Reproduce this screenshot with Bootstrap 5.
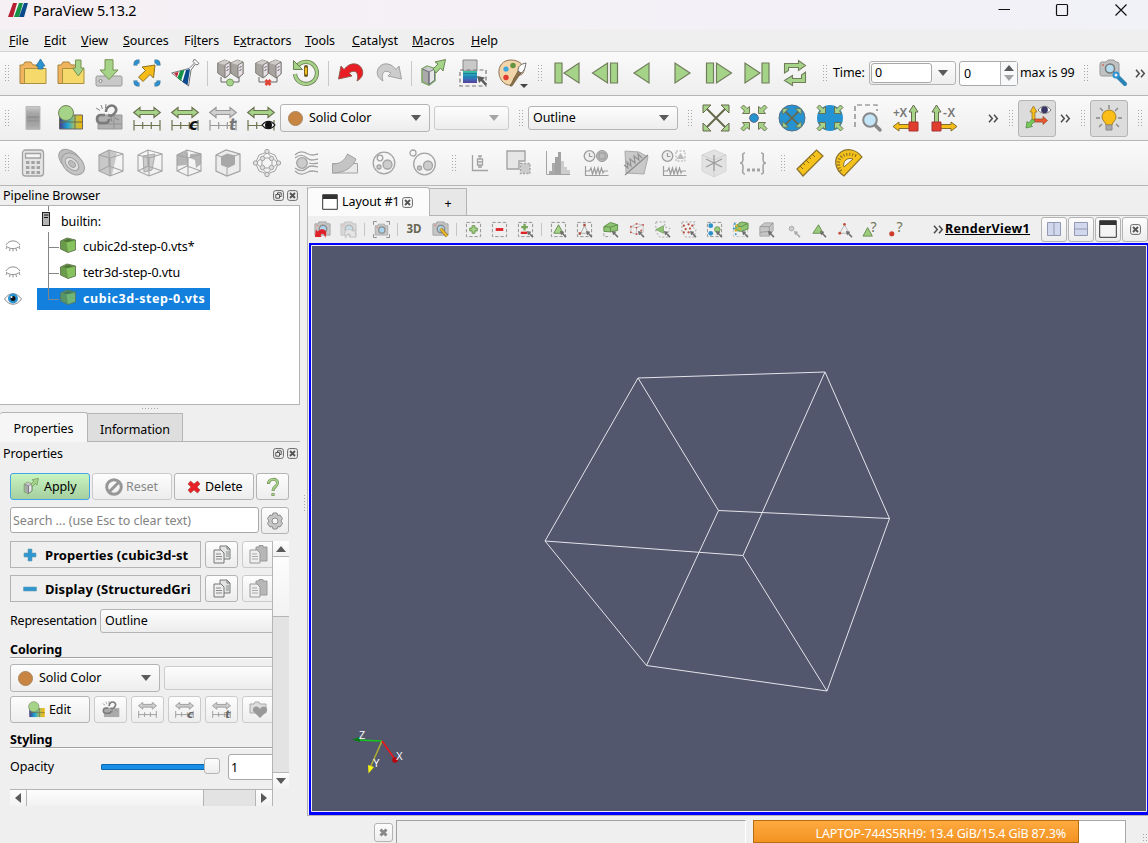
<!DOCTYPE html>
<html lang="en">
<head>
<meta charset="utf-8">
<title>ParaView 5.13.2</title>
<meta name="viewport" content="width=device-width, initial-scale=1">
<link href="https://cdn.jsdelivr.net/npm/bootstrap@5.3.0/dist/css/bootstrap.min.css" rel="stylesheet">
<style>
html,body{height:843px;overflow:hidden}
body{background:#efefef;font:12.5px/16px "Noto Sans","Open Sans",sans-serif;letter-spacing:-.08px;color:#000;width:1148px}
svg{display:block;flex:none;overflow:visible}
span,u,b{white-space:nowrap}
.titlebar{height:29px;background:linear-gradient(90deg,#f6f0f4,#f1f1f8)}
.titlebar .caption{font-size:14.4px;letter-spacing:-.2px;width:104px;margin-left:5px;line-height:22px;height:22px}
.menus{height:23px;border-bottom:1px solid #d3d3d3;padding-left:9px}
.menus span{display:block;line-height:24px}
.bar{height:45px;border-bottom:1px solid #b6b6b6;background:linear-gradient(#fafafa,#eee)}
.cell{width:38px;display:flex;justify-content:center;flex:none}
.cell39{width:39px;display:flex;justify-content:center;flex:none}
.cell svg,.cell39 svg{width:28px;height:28px}
.grip{width:5px;height:17px;flex:none;background-image:radial-gradient(circle at .5px .5px,#a8a8a8 .6px,transparent .8px);background-size:3px 3px}
.vsep{width:1px;height:25px;background:#c8c8c8;margin:0 3px;flex:none}
.qbox{border:1px solid #b4b4b4;border-radius:3px;background:linear-gradient(#fdfdfd,#ededed);display:flex;align-items:center;flex:none}
.qoff{border-color:#cbcbcb;color:#888}
.sunk{background:#dcdcdc}
.field{background:#fff;border:1px solid #a9a9a9;border-radius:3px;flex:none}
.tri{width:0;height:0;border:5px solid transparent;border-bottom:0;border-top:6px solid #5a5a5a;flex:none}
.tri.up{border:5px solid transparent;border-top:0;border-bottom:6px solid #5a5a5a}
.tri.lt{border:5px solid transparent;border-left:0;border-right:6px solid #5a5a5a}
.tri.rt{border:5px solid transparent;border-right:0;border-left:6px solid #5a5a5a}
.tri.pale{border-top-color:#a5a5a5}
.dot{width:15px;height:15px;border-radius:50%;background:#c78541;border:1px solid #a8855f;flex:none}
.dock{width:300px}
.dockhead{height:19px;padding:0 2px 0 3px}
.tree{height:200px;border:1px solid #b4b4b4;border-left:0;background:#fff}
.treerow{height:26px;display:flex;align-items:center}
.sel{background:#1280dc;color:#fff;height:22px;width:173px;font-weight:700;letter-spacing:.56px;display:flex;align-items:center}
.tabs{height:30px}
.tabon{width:88px;height:30px;background:#f6f6f6;border:1px solid #b4b4b4;border-left:0;border-bottom:0;border-radius:3px 3px 0 0;text-align:center;line-height:32px}
.taboff{width:95px;height:29px;margin-top:1px;background:#dedede;border:1px solid #b4b4b4;border-left:0;text-align:center;line-height:32px}
.props{padding-left:10px}
.scroller{width:262px;height:248px;overflow:hidden}
.sechead{width:191px;height:27px;border:1px solid #b4b4b4;font-size:13px;font-weight:700;letter-spacing:.1px;display:flex;align-items:center;padding-left:12px;flex:none}
.rule{border-bottom:1px solid #a0a0a0;font-weight:700;box-shadow:0 1px #fff}
.vscroll{width:17px;height:248px;border-left:1px solid #b4b4b4;background:#e3e3e3}
.hscroll{width:263px;height:17px;border-top:1px solid #b4b4b4;border-right:1px solid #b4b4b4;background:#e3e3e3}
.knob{background:linear-gradient(#fdfdfd,#f2f2f2);display:flex;align-items:center;justify-content:center;flex:none}
.work{width:841px;border-left:1px solid #b4b4b4;height:629px;border-bottom:1px solid #b4b4b4}
.sm{width:26px;display:flex;justify-content:center;flex:none}
.sm svg{width:17px;height:17px}
.smsep{width:1px;height:13px;background:#c4c4c4;margin:0 3px;flex:none}
.render{background:#52576e;height:572px;border:3px solid #0000ff;border-width:2px 1px 3px 2px;position:relative}
.usage{width:373px;height:23px;border:1px solid #a9a9a9;border-bottom:0;background:#fff}
.usage .fill{background:linear-gradient(#ffaa40,#f29322);border:1px solid #b56d10;color:#fff;height:23px;margin:-1px;text-align:right;padding-right:12px;line-height:26px;letter-spacing:-.15px}
</style>
</head>
<body>
<svg width="0" height="0" class="position-absolute">
<defs>
<linearGradient id="rainbow"><stop offset="0" stop-color="#453a86"/><stop offset=".35" stop-color="#1da5d8"/><stop offset=".7" stop-color="#b9c256"/><stop offset="1" stop-color="#f5b400"/></linearGradient>
<linearGradient id="greyv" x2="0" y2="1"><stop offset="0" stop-color="#ccc"/><stop offset=".5" stop-color="#8c8c8c"/><stop offset="1" stop-color="#b5b5b5"/></linearGradient>
<linearGradient id="cool" x2="0" y2="1"><stop offset="0" stop-color="#39c49e"/><stop offset=".5" stop-color="#2086c8"/><stop offset="1" stop-color="#5d3e99"/></linearGradient>
<g id="chev"><path d="M1 .8 4.300 4.500 1 8.200M6 .8l3.300 3.700L6 8.200" fill="none" stroke="#4c4c4c" stroke-width="1.500"/></g>
<g id="folder"><path d="M1 24.500V6h3l2-3h6l2 3h8v18.500z" fill="#f0b35e" stroke="#a8843c"/><path d="M5.500 9.500h21.500v15H5.500z" fill="#f5d96b" stroke="#a8903f"/></g>
<g id="server"><path d="M.7 4 7.500 1l5.500 2v12l-5 4-7.300-5z" fill="#a7a49f" stroke="#77746d" stroke-width=".9"/><path d="M1 4l6.500-3L13 3 8 6z" fill="#cfccc9"/><path d="M8 6l5-3v12l-5 4z" fill="#e6dfe5" stroke="#77746d" stroke-width=".9"/><path d="M9.500 8.500l2-1M9.500 11.500l2-1" stroke="#555" fill="none"/></g>
<g id="harrow"><path d="M.7 8.500 7 3.500v3h14v-3l6.300 5-6.300 5v-3H7v3z"/></g>
<g id="scale"><path d="M1 16v10.500M27 16v10.500M1 21.500h26M9.700 18v7M18.300 18v7" fill="none"/></g>
<g id="cubew"><path d="M2 6 12 1l14 4v17l-13 5L2 22zM2 6l11 3 13-4M13 9v18M12 1v16M2 22l10-5 14 5" fill="none" stroke="#a3a3a3" stroke-width="1.100"/></g>
<g id="headout"><path d="M1 1h8L1 9z" fill="#a5d388" stroke="#67694c"/></g>
<g id="headin"><path d="M9.500 9.500H2.500l2-2.500L1 3.500 3.500 1 7 4.500l2.500-2z" fill="#a5d388" stroke="#67694c" stroke-width=".9"/></g>
<g id="clock"><circle cx="6.500" cy="7" r="5.300" fill="#eee" stroke="#9d9d9d" stroke-width="1.300"/><path d="M6.500 4v3.500h3M2.500 17v10M2.500 22h4l1.500-3 1.500 6 2-6 1.500 6 2-6 1.500 6 2-6 1.500 5 1-2h4M2.500 26.500h23" fill="none" stroke="#9d9d9d" stroke-width="1.200"/></g>
<g id="cam"><path d="M1 3h4V1h8v2h4v12H1z" fill="#c6c6c6" stroke="#a5a5a5"/><circle cx="9.500" cy="8.500" r="4" fill="#a9d5ee" stroke="#8c8c8c" stroke-width="1.500"/><path d="M2.500 5h2" stroke="#e76"/></g>
<g id="dash"><path d="M1.500 1.500h15v15h-15z" fill="none" stroke="#909090" stroke-dasharray="3.500 2"/></g>
<g id="cur"><path d="M10.500 10.500 15 11.500 14 13l3.500 3.500-1.300 1.300L13 14l-1.300 1z" fill="#6d6d6d"/></g>
<g id="closebox"><rect x=".6" y=".6" width="9.800" height="9.800" rx="2" fill="none" stroke="#666"/><path d="M3 3l5 5M8 3 3 8" stroke="#555" stroke-width="1.900"/></g>
<g id="floatbox"><rect x=".6" y=".6" width="9.800" height="9.800" rx="2" fill="none" stroke="#666"/><path d="M4.500 4V2.800h3.700v3.700H7M2.800 4.500h3.700v3.700H2.800z" fill="none" stroke="#555"/></g>
<g id="gcube"><path d="M.5 4 7 1l8.500 2v10L8 15.500.5 12z" fill="#699b4b" stroke="#647652" stroke-width=".9"/><path d="M6.500 5.500 15 4v8.500l-7 2.500z" fill="#86c35f"/><path d="M3 4l5-2 5 1.300-6 1.700z" fill="#4d7535"/></g>
<g id="closedeye"><path d="M1 6C4 .5 12 .5 15 6M1 7c4 3.500 10 3.500 14 0M2 8l-1 2M5 9.500 4.500 12M8 10v2.500M11 9.500l.5 2.500M14 8l1 2" fill="none" stroke="#929292"/></g>
<g id="chain"><path d="M10 11H5c-4 1-4 7 0 8h5c3 0 4-2 4-4M11 8c0-6 6-8 9-5s0 7-4 9l-3-1" fill="none" stroke="#7b7b7b" stroke-width="2.600"/><path d="M6 1l1.500 4M1 4l4 2.500M11 0l-.5 4M20 14l4 2M16 14l1 4" stroke="#888"/></g>
<g id="pages"><path d="M7 1h7l3 3v10H7z" fill="#e2e4e4" stroke="#777"/><path d="M14 1v3h3" fill="none" stroke="#777"/><path d="M1 5h7l3 3v10H1z" fill="#eee" stroke="#777"/><path d="M3 9h5M3 11.500h6M3 14h6M13 7h3M13 9h3M13 11h3" stroke="#888"/></g>
<g id="paste"><path d="M7 2h3V.5h4V2h4v14H7z" fill="#b7b7b7" stroke="#999"/><path d="M1 5h7l3 3v10H1z" fill="#eee" stroke="#999"/><path d="M3 9h5M3 11.500h6M3 14h6" stroke="#aaa"/></g>
<g id="boxarrow"><path d="M2 10l5-3 8 2.500v12L9 26l-7-3z" fill="#aaa" stroke="#7fa768" stroke-width="1.600"/><path d="M2.500 10l5-2.500 7 2.500-5.500 3z" fill="#c9c9c9"/><path d="M9 13l5.500-3v11L9 25.500z" fill="#e6e6e6" stroke="#667" stroke-width=".8"/><path d="M2.500 10 9 13v12.500" fill="none" stroke="#667"/><path d="M13 10l5-5-3-2 10.500-2.500L23 12l-2.500-3-4.500 5z" fill="#a5d388" stroke="#6a8853"/></g>
</defs>
</svg>

<header class="titlebar d-flex">
  <svg width="20" height="17" viewBox="0 0 20 17" style="margin:3px 0 0 8px"><path d="M5 0h4L5 14H0z" fill="#b51f31"/><path d="M11 0h4l-4 14H6z" fill="#159447"/><path d="M16 0h4l-4 14h-5z" fill="#0b4a8d"/></svg>
  <span class="caption">ParaView 5.13.2</span>
  <svg class="ms-auto" width="140" height="22" viewBox="998 0 140 22"><path d="M998.500 9.500h11.500M1115.500 4.500l11 11m0-11-11 11" stroke="#111" stroke-width="1.200"/><rect x="1056.500" y="4.500" width="11" height="11" rx="1" stroke="#111" stroke-width="1.200" fill="none"/></svg>
  <i style="width:10px"></i>
</header>

<nav class="menus d-flex">
  <span style="width:35px"><u>F</u>ile</span><span style="width:37px"><u>E</u>dit</span><span style="width:42px"><u>V</u>iew</span><span style="width:61px"><u>S</u>ources</span><span style="width:49px">Fi<u>l</u>ters</span><span style="width:72px">E<u>x</u>tractors</span><span style="width:47px"><u>T</u>ools</span><span style="width:60px"><u>C</u>atalyst</span><span style="width:59px"><u>M</u>acros</span><span><u>H</u>elp</span>
</nav>

<div class="bar d-flex align-items-center" style="height:44px;padding-bottom:1px">
  <div class="grip" style="margin:0 4px 0 5px"></div>
  <div class="cell"><svg viewBox="0 0 28 28"><use href="#folder"/><path d="M21.500 0 26 7h-2v3h-5V7h-2z" fill="#2b93d1" stroke="#27668b" stroke-width=".7"/></svg></div>
  <div class="cell"><svg viewBox="0 0 28 28"><use href="#folder"/><path d="M18.500 1H24v8h3l-5.700 8L15.500 9h3z" fill="#a5d388" stroke="#77914f"/></svg></div>
  <div class="cell"><svg viewBox="0 0 28 28"><rect x="1" y="17" width="26" height="10" rx="1.500" fill="#c8c8c8" stroke="#999"/><circle cx="5.500" cy="22" r="1.500" fill="#eee" stroke="#888"/><path d="M10 .7h8V11h5l-9 9.500L5 11h5z" fill="#a5d388" stroke="#77914f"/></svg></div>
  <div class="cell"><svg viewBox="0 0 28 28"><path d="M2.500 6.500v-1q0-3 3-3h1M21.500 2.500h1q3 0 3 3v1M2.500 21.500v1q0 3 3 3h1M21.500 25.500h1q3 0 3-3v-1" fill="none" stroke="#3b6f92" stroke-width="4"/><path d="M2.500 6v-.5q0-3 3-3H6M22 2.500h.5q3 0 3 3V6M2.500 22v.5q0 3 3 3H6M22 25.500h.5q3 0 3-3V22" fill="none" stroke="#2b93d1" stroke-width="2.800"/><path d="M5.500 18l7-6.500L9 8l13-2-1.500 13-3.500-3.500-7 7z" fill="#f5bb17" stroke="#8b7127"/></svg></div>
  <div class="cell"><svg viewBox="0 0 28 28"><path d="M.7 14 18 9.500 23.500 4 22 2.500 23.500 0 28 4.500l-2 1.500-1.500-1L20 11l-2.500 16z" fill="#fafafa" stroke="#666" stroke-width=".9"/><path d="M3 14l4.500-1L6 18z" fill="#c52535"/><path d="M9 12l4.500-1L10 22l-3.500-3z" fill="#159447"/><path d="M15 11l4-1-2.500 16-5-3z" fill="#0b4a8d"/></svg></div>
  <div class="vsep"></div>
  <div class="cell"><svg viewBox="0 0 28 28"><use href="#server" x="1"/><use href="#server" x="14"/><path d="M5 18v5h18v-5" fill="none" stroke="#666"/><circle cx="14" cy="23.500" r="3.500" fill="#a5d388" stroke="#799b64"/></svg></div>
  <div class="cell"><svg viewBox="0 0 28 28"><use href="#server" x="1"/><use href="#server" x="14"/><path d="M5 18v5h18v-5" fill="none" stroke="#666"/><path d="M11.500 21l5 5m0-5-5 5" stroke="#e04537" stroke-width="2.800"/></svg></div>
  <div class="cell"><svg viewBox="0 0 28 28"><path d="M5 7.500A11 11 0 1 1 3 15" fill="none" stroke="#6d7d54" stroke-width="4.200"/><path d="M5 7.500A11 11 0 1 1 3 15" fill="none" stroke="#a5d388" stroke-width="2.600"/><path d="M1.500 1.500v9h9z" fill="#a5d388" stroke="#6d7d54"/><path d="M14 8v8" stroke="#69551d" stroke-width="4" stroke-linecap="round"/><path d="M14 8.500v7" stroke="#f1bd25" stroke-width="2.300"/></svg></div>
  <div class="vsep"></div>
  <div class="cell"><svg viewBox="0 0 28 28"><path d="M1.500 20 4 7l3 3.500C13 2.500 22 3.500 25 10c2 5 0 9-5 12 2-6 0-13-8-8l3 3z" fill="#e91d24" stroke="#8a5a4a" stroke-width=".9"/></svg></div>
  <div class="cell"><svg viewBox="0 0 28 28"><path d="M26.500 20 24 7l-3 3.500C15 2.500 6 3.500 3 10c-2 5 0 9 5 12-2-6 0-13 8-8l-3 3z" fill="#ccc" stroke="#9a9a9a" stroke-width=".9"/></svg></div>
  <div class="vsep" style="margin:0 2px 0 3px"></div>
  <div class="cell39"><svg viewBox="0 0 28 28"><use href="#boxarrow"/></svg></div>
  <div class="cell39"><svg viewBox="0 0 28 28"><path d="M4 1h14v11H4z" fill="#c9c9c9" stroke="#888"/><path d="M4 12h14v12H4z" fill="url(#cool)"/><path d="M4 14.500h14M4 18h14" stroke="#1f7d99"/><path d="M1 11h26v16H1z" fill="none" stroke="#777" stroke-dasharray="4 2.500" stroke-width="1.200"/><path d="M18 17l8 1.500-2 2 4 4.500-2 1.500-4-4.500-2 2z" fill="#5c5c5c"/></svg></div>
  <div class="cell39"><svg viewBox="0 0 28 28"><path d="M13 1C5 1 0 7 1 15c1 7 7 12 12 11 4-1 1-6 4-8 4-2 9-2 9-7 0-6-6-10-13-10z" fill="#f1d4a8" stroke="#8f7557"/><circle cx="8" cy="10" r="2.600" fill="#3aa7e0"/><circle cx="15" cy="6.500" r="2.700" fill="#62943e"/><circle cx="8" cy="18.500" r="2.700" fill="#e13b2e"/><path d="M12 27l8-15 3 2-9 13z" fill="#8b7146" stroke="#5d4e34" stroke-width=".6"/><path d="M20 12c0-5 3-7 8-8-1 4-1 8-5 10z" fill="#fff" stroke="#666"/><path d="M22 25h8l-4 4z" fill="#444"/></svg></div>
  <div class="grip" style="margin:0 5px 0 7px"></div>
  <div class="cell"><svg viewBox="0 0 28 28"><path d="M2 4h7v20H2zM26 4v20L11 14z" fill="#a5d388" stroke="#717d5b" stroke-width="1.200"/></svg></div>
  <div class="cell"><svg viewBox="0 0 28 28"><path d="M19.500 4h7v20h-7zM16.500 4v20L1.500 14z" fill="#a5d388" stroke="#717d5b" stroke-width="1.200"/></svg></div>
  <div class="cell"><svg viewBox="0 0 28 28"><path d="M20 4v20L5 14z" fill="#a5d388" stroke="#717d5b" stroke-width="1.200"/></svg></div>
  <div class="cell"><svg viewBox="0 0 28 28"><path d="M8 4v20l15-10z" fill="#a5d388" stroke="#717d5b" stroke-width="1.200"/></svg></div>
  <div class="cell"><svg viewBox="0 0 28 28"><path d="M1.500 4h7v20h-7zM11.500 4v20l15-10z" fill="#a5d388" stroke="#717d5b" stroke-width="1.200"/></svg></div>
  <div class="cell"><svg viewBox="0 0 28 28"><path d="M19 4h7v20h-7zM2 4v20l15-10z" fill="#a5d388" stroke="#717d5b" stroke-width="1.200"/></svg></div>
  <div class="cell"><svg viewBox="0 0 28 28"><path d="M3.500 14V4.500h14V1.500l7 5-7 5v-3h-10v3zM24.500 13v10.500h-13v3l-8-5 8-5v3h9V16z" fill="#a5d388" stroke="#717d5b" stroke-width="1.100"/></svg></div>
  <div class="grip" style="margin:0 2px 0 9px"></div>
  <span style="width:37px;margin-left:3px">Time:</span>
  <div class="qbox" style="width:87px;height:24px;margin-left:-1px"><div class="field" style="width:61px;height:20px;padding-left:3px;line-height:18px;margin-left:1px">0</div><i class="tri" style="margin-left:6px"></i></div>
  <div class="field d-flex align-items-stretch" style="width:59px;height:25px;margin-left:3px;line-height:24px"><span style="width:41px;padding-left:4px;border-right:1px solid #b4b4b4">0</span><div class="flex-grow-1 d-flex flex-column align-items-center justify-content-center gap-1 bg-light"><i class="tri up"></i><i class="tri pale"></i></div></div>
  <span style="width:64px;margin-left:2px">max is 99</span>
  <div class="grip"></div>
  <svg width="30" height="30" viewBox="0 0 30 30" style="margin:0 6px 0 10px"><path d="M1 6q0-2 2-2h4l2-2h6l2 2h1q2 0 2 2v10q0 2-2 2H3q-2 0-2-2z" fill="#bfc1c2" stroke="#999"/><circle cx="11" cy="10.500" r="4.500" fill="#b4def0" stroke="#777" stroke-width="1.500"/><path d="M3 7h2" stroke="#e04537"/><path d="M17 17l9 9" stroke="#2b82b7" stroke-width="4" stroke-linecap="round"/><circle cx="17" cy="17" r="2.500" fill="#eee" stroke="#2b93d1" stroke-width="2"/></svg>
  <svg width="11" height="9"><use href="#chev"/></svg>
</div>

<div class="bar d-flex align-items-center">
  <div class="grip" style="margin:0 4px 0 5px"></div>
  <div class="cell"><svg viewBox="0 0 28 28"><path d="M7 2.500h14v23H7z" fill="url(#greyv)" stroke="#bbb"/><path d="M7 11h14M7 15h14M7 19h14" stroke="#aaa"/></svg></div>
  <div class="cell"><svg viewBox="0 0 28 28"><path d="M2.500 11h23v14h-23z" fill="url(#rainbow)" stroke="#666"/><path d="M2 18h24M18 11v14" stroke="#6e6d43"/><circle cx="9" cy="9" r="7.500" fill="#a5d388" stroke="#718359"/></svg></div>
  <div class="cell"><svg viewBox="0 0 28 28"><path d="M3 11h24v14H3z" fill="#b0b0b0" stroke="#999"/><path d="M19 11v14M3 20h24" stroke="#929292"/><use href="#chain"/></svg></div>
  <div class="cell"><svg viewBox="0 0 28 28" fill="#a5d388" stroke="#6c7450" stroke-width="1.200"><use href="#harrow"/><use href="#scale"/></svg></div>
  <div class="cell"><svg viewBox="0 0 28 28" fill="#a5d388" stroke="#6c7450" stroke-width="1.200"><use href="#harrow"/><use href="#scale"/><text x="18" y="26" font-family="DejaVu Sans" font-size="15" font-weight="700" font-style="italic" fill="#111" stroke="none">c</text></svg></div>
  <div class="cell"><svg viewBox="0 0 28 28" fill="#d0d0d0" stroke="#999" stroke-width="1.200"><use href="#harrow"/><use href="#scale"/><text x="20" y="26" font-family="DejaVu Sans" font-size="15" font-weight="700" font-style="italic" fill="#777" stroke="none">t</text></svg></div>
  <div class="cell"><svg viewBox="0 0 28 28" fill="#a5d388" stroke="#6c7450" stroke-width="1.200"><use href="#harrow"/><use href="#scale"/><path d="M15 21c4-5 9-5 13 0-4 5-9 5-13 0z" fill="#fff" stroke="#111"/><circle cx="21.500" cy="21" r="3.500" fill="#111" stroke="none"/></svg></div>
  <div class="qbox" style="width:150px;height:28px"><i class="dot" style="margin-left:7px"></i><span style="margin-left:6px;width:102px">Solid Color</span><i class="tri"></i></div>
  <div class="qbox qoff" style="width:75px;height:24px;margin-left:4px"><i class="tri pale" style="margin-left:54px"></i></div>
  <div class="grip" style="margin:0 4px 0 10px"></div>
  <div class="qbox" style="width:150px;height:24px"><span style="width:130px;padding-left:4px">Outline</span><i class="tri"></i></div>
  <div class="grip" style="margin:0 4px 0 10px"></div>
  <div class="cell"><svg viewBox="0 0 28 28"><path d="M4 4l20 20M24 4 4 24" stroke="#67694c" stroke-width="2"/><use href="#headout"/><use href="#headout" transform="matrix(-1 0 0 1 28 0)"/><use href="#headout" transform="matrix(1 0 0 -1 0 28)"/><use href="#headout" transform="rotate(180 14 14)"/></svg></div>
  <div class="cell"><svg viewBox="0 0 28 28"><use href="#headin"/><use href="#headin" transform="matrix(-1 0 0 1 28 0)"/><use href="#headin" transform="matrix(1 0 0 -1 0 28)"/><use href="#headin" transform="rotate(180 14 14)"/><circle cx="14" cy="14" r="4.300" fill="#2592d2" stroke="#52667b"/></svg></div>
  <div class="cell"><svg viewBox="0 0 28 28"><circle cx="14" cy="14" r="13" fill="#2592d2" stroke="#52718b"/><g transform="translate(4 4) scale(.71)"><path d="M4 4l20 20M24 4 4 24" stroke="#67694c" stroke-width="2.500"/><use href="#headout"/><use href="#headout" transform="matrix(-1 0 0 1 28 0)"/><use href="#headout" transform="matrix(1 0 0 -1 0 28)"/><use href="#headout" transform="rotate(180 14 14)"/></g></svg></div>
  <div class="cell"><svg viewBox="0 0 28 28"><circle cx="14" cy="14" r="13" fill="#2592d2"/><use href="#headin"/><use href="#headin" transform="matrix(-1 0 0 1 28 0)"/><use href="#headin" transform="matrix(1 0 0 -1 0 28)"/><use href="#headin" transform="rotate(180 14 14)"/></svg></div>
  <div class="cell"><svg viewBox="0 0 28 28"><path d="M1 23V1h22v6" fill="none" stroke="#777" stroke-dasharray="5 3" stroke-width="1.200"/><path d="M21 21l5 5" stroke="#888" stroke-width="3.500" stroke-linecap="round"/><circle cx="16" cy="16" r="6.800" fill="#c4e5f7" stroke="#888" stroke-width="2"/></svg></div>
  <div class="cell"><svg viewBox="0 0 28 28"><path d="M21.500 1l4.500 7h-2.500v11h-4V8H17z" fill="#a5d388" stroke="#67694c"/><path d="M1 22.500l6-4.500v2.500h13v4H7V27z" fill="#f4bd19" stroke="#836c2c"/><path d="M17 18h9v9h-9z" fill="#df3e2e" stroke="#a33"/><text x="1" y="13" font-family="Noto Sans" font-size="12" font-weight="600" fill="#777" textLength="14">+X</text></svg></div>
  <div class="cell"><svg viewBox="0 0 28 28"><path d="M6.500 1 11 8H8.500v11h-4V8H2z" fill="#a5d388" stroke="#67694c"/><path d="M27 22.500 21 18v2.500H8v4h13V27z" fill="#f4bd19" stroke="#836c2c"/><path d="M2 18h9v9H2z" fill="#df3e2e" stroke="#a33"/><text x="13" y="13" font-family="Noto Sans" font-size="12" font-weight="600" fill="#777" textLength="12">-X</text></svg></div>
  <svg width="11" height="9" style="margin:0 10px 0 25px"><use href="#chev"/></svg>
  <div class="grip" style="margin-right:4px"></div>
  <div class="qbox sunk justify-content-center" style="width:38px;height:37px"><svg width="28" height="28" viewBox="0 0 28 28"><path d="M9 17V8H7l3.500-6L14 8h-2v9" fill="#f4bd19" stroke="#9a762b" stroke-width=".8"/><path d="M11 15h9v-2.500l4.500 4-4.500 4V18h-9z" fill="#ef5730" stroke="#93512e" stroke-width=".8"/><path d="M9 15l3 2-4 4 1.500 1.500L3 24l1-6.500L6 19z" fill="#74ce56" stroke="#5c8651" stroke-width=".8"/><path d="M15 6c4-5 9-5 13 0-4 4.500-9 4.500-13 0z" fill="#fff" stroke="#777"/><circle cx="21.500" cy="5.800" r="3.400" fill="#393766"/></svg></div>
  <svg width="11" height="9" style="margin:0 10px 0 4px"><use href="#chev"/></svg>
  <div class="grip" style="margin-right:4px"></div>
  <div class="qbox sunk justify-content-center" style="width:38px;height:37px"><svg width="28" height="28" viewBox="0 0 28 28"><path d="M14 1v4M5 4l3 3M23 4l-3 3M1 14h4M23 14h4M4 23l3-3M24 23l-3-3" stroke="#888" stroke-width="1.400"/><path d="M11 21c0-3-4-4-4-8a7 7 0 0 1 14 0c0 4-4 5-4 8z" fill="#fbbd18" stroke="#a38226"/><path d="M11 21h6v5h-6z" fill="#aaa" stroke="#888"/></svg></div>
  <div class="grip" style="margin-left:10px"></div>
</div>

<div class="bar d-flex align-items-center">
  <div class="grip" style="margin:0 3px 0 5px"></div>
  <div class="cell39"><svg viewBox="0 0 28 28" fill="none" stroke="#a3a3a3" stroke-width="1.300"><rect x="3.500" y="1" width="21" height="26" rx="3" fill="#e4e4e4"/><path d="M6.500 4.500h15v4.500h-15z" fill="#f5f5f5"/><path d="M7 13.500h14M7 18.500h14M7 23.500h14" stroke-width="3.200" stroke-dasharray="3.400 1.900"/></svg></div>
  <div class="cell39"><svg viewBox="0 0 28 28" fill="#bdbdbd" stroke="#a0a0a0"><ellipse cx="12" cy="11" rx="13" ry="8.500" transform="rotate(42 12 11)"/><ellipse cx="15" cy="15" rx="13" ry="9" transform="rotate(42 15 15)" fill="#c4c4c4"/><ellipse cx="14" cy="15" rx="8" ry="5" transform="rotate(42 14 15)" fill="#e0e0e0"/><ellipse cx="14" cy="15" rx="4" ry="2.500" transform="rotate(42 14 15)"/></svg></div>
  <div class="cell39"><svg viewBox="0 0 28 28"><path d="M2 6 12 1l8 3-5 22-3 0-10-4z" fill="#c8c8c8"/><use href="#cubew"/></svg></div>
  <div class="cell39"><svg viewBox="0 0 28 28"><path d="M7 7l12-2-3 16-8 2z" fill="#ccc" stroke="#aaa"/><use href="#cubew"/></svg></div>
  <div class="cell39"><svg viewBox="0 0 28 28"><path d="M2 6l9-4 2 4-2 10-9 1zM15 5l11-1v11l-5 4-1-8-5-2z" fill="#b5b5b5"/><use href="#cubew"/></svg></div>
  <div class="cell39"><svg viewBox="0 0 28 28"><path d="M2 6 12 1l14 4v17l-13 5L2 22z" fill="#ececec" stroke="#a3a3a3" stroke-width="1.200"/><path d="M2 6l11 3.500L26 5M13 19v8" fill="none" stroke="#a3a3a3"/><path d="M7 7.500l6-3 8 2v9L14 19l-7-3z" fill="#a8a8a8"/></svg></div>
  <div class="cell39"><svg viewBox="0 0 28 28" fill="#e0e0e0" stroke="#a3a3a3"><path d="M14 3 6 6 2.500 14 6 22l8 3 8-3 3.500-8L22 6zM14 3l-5 6h10zM2.500 14 9 9v10zM25.500 14 19 9v10zM14 25l-5-6h10z" fill="none"/><circle cx="14" cy="2.500" r="2.200"/><circle cx="14" cy="25.500" r="2.200"/><circle cx="2.500" cy="14" r="2.200"/><circle cx="25.500" cy="14" r="2.200"/><circle cx="9.500" cy="9.500" r="2.200"/><circle cx="18.500" cy="9.500" r="2.200"/><circle cx="9.500" cy="18.500" r="2.200"/><circle cx="18.500" cy="18.500" r="2.200"/></svg></div>
  <div class="cell39"><svg viewBox="0 0 28 28" fill="none" stroke="#a3a3a3" stroke-width="1.300"><circle cx="10" cy="14" r="5.300" fill="#ccc"/><path d="M3 6c5-5 9-3 13-1s5 1 10 0M3 9c5-4 9-3 12 0s6 2 11 1M17 14c3 1 5 1 9 0M3 19c5 4 9 3 12 0s6-2 11-1M3 22c5 5 9 3 13 1s5-1 10 0"/></svg></div>
  <div class="cell39"><svg viewBox="0 0 28 28" fill="#c4c4c4" stroke="#a3a3a3"><path d="M1.500 24V14.500h25V24z" fill="#e9e9e9"/><path d="M1.500 15c7 0 12-3 15-10l8.500 5c-3 8-11 14-23.500 14z"/></svg></div>
  <div class="cell39"><svg viewBox="0 0 28 28" fill="none" stroke="#a3a3a3" stroke-width="1.300"><circle cx="14" cy="14" r="10.800"/><circle cx="10" cy="9" r="2.800"/><circle cx="17.500" cy="15.500" r="4.500" fill="#ccc"/><circle cx="9" cy="18" r="2" fill="#ccc"/></svg></div>
  <div class="cell39"><svg viewBox="0 0 28 28" fill="none" stroke="#a3a3a3" stroke-width="1.300"><circle cx="15.500" cy="15" r="10.800"/><circle cx="4" cy="4" r="3"/><circle cx="19" cy="16.500" r="4.500" fill="#ccc"/><circle cx="10.500" cy="19" r="2" fill="#ccc"/></svg></div>
  <div class="grip" style="margin:0 3px 0 10px"></div>
  <div class="cell39"><svg viewBox="0 0 28 28" fill="none" stroke="#a3a3a3" stroke-width="1.300"><path d="M6.500 6v15.500H22M14 7v3M14 16v2M11.500 10h5v6h-5zM11.500 13h5M12 7h4M12 18h4"/></svg></div>
  <div class="cell39"><svg viewBox="0 0 28 28" fill="#e6e6e6" stroke="#a3a3a3" stroke-width="1.400"><path d="M2 2h18v10h-6v8H2z"/><path d="M15.500 14.500h9.500v10h-9.500z" stroke-dasharray="2 1.500" fill="#ccc"/></svg></div>
  <div class="cell39"><svg viewBox="0 0 28 28"><path d="M2.500 2v23.500H26" fill="none" stroke="#a3a3a3"/><path d="M5 25v-3h3v3zM8 25V14h3v11z" fill="#aaa"/><path d="M11 25V8h3v17zM14 25V3h3v22z" fill="#a2a2a2"/><path d="M17 25V12h3v13zM20 25v-7h3v7zM23 25v-4h3v4z" fill="#cdcdcd"/></svg></div>
  <div class="cell39"><svg viewBox="0 0 28 28"><use href="#clock"/><circle cx="19" cy="7" r="5.500" fill="#bbb" stroke="#999"/><path d="M16 4h6v6h-6z" fill="none" stroke="#999"/></svg></div>
  <div class="cell39"><svg viewBox="0 0 28 28"><path d="M3 2l14 1 9 5-4 17-18-1z" fill="#c9c9c9" stroke="#aaa"/><path d="M3 26 26 6" stroke="#8f8f8f" stroke-width="1.400"/><path d="M2 16l4 3-1-6 4 4-1-7 5 4-1-7 5 4-1-6 4 4" stroke="#939393" stroke-width="1.200" fill="none"/></svg></div>
  <div class="cell39"><svg viewBox="0 0 28 28"><use href="#clock"/><path d="M15 2h9v10h-9z" fill="none" stroke="#aaa" stroke-dasharray="2 1.500"/><path d="M19.500 4l4 6h-8z" fill="#bbb"/></svg></div>
  <div class="cell39"><svg viewBox="0 0 28 28"><path d="M14 1l12 5v16l-12 6-12-6V6z" fill="#e2e2e2" stroke="#d6d6d6"/><path d="M2 6l12 5 12-5M14 11v17" stroke="#d0d0d0" fill="none"/><path d="M14 6v16M6 10l16 8M22 10 6 18" stroke="#9d9d9d" stroke-width="1.300"/></svg></div>
  <div class="cell39"><svg viewBox="0 0 28 28" fill="none" stroke="#a3a3a3" stroke-width="1.600"><path d="M6 4C2.500 4 4 7 4 10q0 4-3 4 3 0 3 4c0 4-1.500 7 2 7M22 4c3.500 0 2 3 2 6q0 4 3 4-3 0-3 4c0 4 1.500 7-2 7"/><path d="M8 21h13" stroke-width="3" stroke-dasharray="3 2"/></svg></div>
  <div class="grip" style="margin:0 4px 0 9px"></div>
  <div class="cell39"><svg viewBox="0 0 28 28"><path d="M1 20 20.500 1l6.500 6L7 27z" fill="#f4c21b" stroke="#8b712c" stroke-width="1.200"/><path d="M4 17l3 3M7 14l2 2M10 11l3 3M13 8l2 2M16 5l3 3" stroke="#806624"/></svg></div>
  <div class="cell39"><svg viewBox="0 0 28 28"><path d="M9 27C-1 20-2 9 6 3c6-4 15-3 21 5z" fill="#f4c21b" stroke="#8b712c" stroke-width="1.200"/><path d="M9 18c-2-6 4-10 9-8z" fill="#f6f6f6" stroke="#8b712c"/><path d="M6 22C-1 12 7 1 22 7" fill="none" stroke="#80662a" stroke-width="3" stroke-dasharray="1 2"/></svg></div>
</div>

<main class="d-flex" style="height:634px">
<aside class="dock">
  <div class="dockhead d-flex align-items-center"><span class="me-auto">Pipeline Browser</span><svg width="11" height="11" style="margin-right:3px"><use href="#floatbox"/></svg><svg width="11" height="11"><use href="#closebox"/></svg></div>
  <div class="tree position-relative">
    <svg class="position-absolute" style="left:42px;top:0" width="22" height="100" viewBox="0 0 22 100"><path d="M6.500 0v5M6.500 26v68M6.500 41.500H17M6.500 67.500H17" stroke="#858585" fill="none"/><rect x=".5" y="6.500" width="7" height="13" fill="#b5b5b5" stroke="#222"/><path d="M2 9h4.500M2 11.500h4" stroke="#111"/></svg>
    <div class="treerow" style="padding:3px 0 0 61px;height:28px"><span>builtin:</span></div>
    <div class="treerow"><svg width="16" height="14" style="margin:-2px auto 0 5px"><use href="#closedeye"/></svg><svg width="16" height="17" style="margin-right:7px;margin-top:-3px"><use href="#gcube"/></svg><span style="width:216px">cubic2d-step-0.vts*</span></div>
    <div class="treerow"><svg width="16" height="14" style="margin:-2px auto 0 5px"><use href="#closedeye"/></svg><svg width="16" height="17" style="margin-right:7px;margin-top:-3px"><use href="#gcube"/></svg><span style="width:216px">tetr3d-step-0.vtu</span></div>
    <div class="treerow"><svg width="18" height="14" viewBox="0 0 18 14" style="margin:0 15px 0 4px"><path d="M.5 7c5-7 12-7 17 0-5 7-12 7-17 0z" fill="#fff" stroke="#888"/><circle cx="9" cy="6.500" r="5" fill="#2c92d1"/><circle cx="9" cy="6.500" r="2.500" fill="#111"/><circle cx="7.500" cy="5" r="1" fill="#fff"/></svg><div class="sel"><svg width="46" height="22" viewBox="37 0 46 22"><path d="M48.500-2v13.500H59" stroke="#7c8c9b" fill="none"/><g transform="translate(60 1)" opacity=".8"><use href="#gcube"/></g></svg><span>cubic3d-step-0.vts</span></div></div>
  </div>
  <div class="d-flex justify-content-center align-items-center" style="height:7px"><div class="grip" style="width:17px;height:1px"></div></div>
  <div class="tabs d-flex" style="border-bottom:1px solid #b4b4b4"><div class="tabon">Properties</div><div class="taboff">Information</div></div>
  <div class="dockhead d-flex align-items-center" style="height:23px"><span class="me-auto">Properties</span><svg width="11" height="11" style="margin-right:3px"><use href="#floatbox"/></svg><svg width="11" height="11"><use href="#closebox"/></svg></div>
  <div class="props">
    <div class="d-flex" style="gap:2px;padding-top:8px">
      <div class="qbox" style="width:80px;height:27px;background:linear-gradient(#c9f5c1,#a5cf9f);border-color:#43a4e8"><svg width="17" height="17" viewBox="0 0 28 28" style="margin:0 4px 0 12px"><use href="#boxarrow"/></svg><span>Apply</span></div>
      <div class="qbox qoff" style="width:80px;height:27px"><svg width="18" height="18" viewBox="0 0 18 18" style="margin:0 3px 0 12px"><circle cx="9" cy="9" r="7.300" fill="none" stroke="#979797" stroke-width="3"/><path d="M4 14 14 4" stroke="#979797" stroke-width="3"/></svg><span>Reset</span></div>
      <div class="qbox" style="width:80px;height:27px"><svg width="14" height="14" viewBox="0 0 14 14" style="margin:0 4px 0 12px"><path d="M3.500 1 7 4l3.500-3L13 4l-3 3 3 3-2.500 3L7 10l-3.500 3L1 10l3-3-3-3z" fill="#e92127" stroke="#a75043" stroke-width=".7"/></svg><span>Delete</span></div>
      <div class="qbox justify-content-center" style="width:33px;height:27px"><svg width="16" height="20" viewBox="0 0 16 20"><path d="M3.500 7C3 1 13 1 12.500 6c0 4-4.500 3-4.500 8M8 16v3" fill="none" stroke="#6f8755" stroke-width="3"/><path d="M3.500 6.500C3 1 13 1 12.500 6c0 4-4.500 3-4.500 7.500M8 16.500v2" fill="none" stroke="#a5d388" stroke-width="1.800"/></svg></div>
    </div>
    <div class="d-flex" style="gap:2px;padding:7px 0"><div class="field" style="width:249px;height:26px;line-height:25px;padding-left:2px;color:#828282;letter-spacing:-.04px">Search ... (use Esc to clear text)</div><div class="qbox justify-content-center" style="width:28px;height:27px"><svg width="18" height="18" viewBox="0 0 18 18"><path d="M7 1h4l.7 2.500L14 3l2.500 3.500L15 9l1.500 2.500L14 15l-2.300-.5L11 17H7l-.7-2.500L4 15l-2.500-3.500L3 9 1.500 6.500 4 3l2.300.5z" fill="#c6c6c6" stroke="#8c8c8c"/><circle cx="9" cy="9" r="3" fill="#f6f6f6" stroke="#8c8c8c"/></svg></div></div>
    <div class="d-flex">
      <div class="scroller">
        <div class="d-flex" style="gap:4px;width:290px"><div class="sechead"><svg width="14" height="14" style="margin-right:8px" viewBox="0 0 14 14"><path d="M5 1h4v4h4v4H9v4H5V9H1V5h4z" fill="#2f97cf" stroke="#6b9cb5" stroke-width=".6"/></svg><span>Properties (cubic3d-st</span></div><div class="qbox justify-content-center" style="width:33px;height:27px"><svg width="18" height="19"><use href="#pages"/></svg></div><div class="qbox qoff justify-content-center" style="width:33px;height:27px"><svg width="19" height="19"><use href="#paste"/></svg></div></div>
        <div class="d-flex" style="gap:4px;width:290px;margin-top:7px"><div class="sechead"><svg width="14" height="14" style="margin-right:8px" viewBox="0 0 14 14"><path d="M.5 5h13v4H.5z" fill="#2f97cf" stroke="#6b9cb5" stroke-width=".6"/></svg><span>Display (StructuredGri</span></div><div class="qbox justify-content-center" style="width:33px;height:27px"><svg width="18" height="19"><use href="#pages"/></svg></div><div class="qbox qoff justify-content-center" style="width:33px;height:27px"><svg width="19" height="19"><use href="#paste"/></svg></div></div>
        <div class="d-flex align-items-center" style="margin-top:7px;width:300px"><span style="width:90px;letter-spacing:-.22px">Representation</span><div class="qbox" style="width:200px;height:24px;padding-left:4px">Outline</div></div>
        <div class="rule" style="height:25px;padding-top:9px">Coloring</div>
        <div class="d-flex align-items-center" style="gap:4px;margin-top:6px;width:300px"><div class="qbox" style="width:150px;height:28px"><i class="dot" style="margin-left:7px"></i><span style="margin-left:6px;width:102px">Solid Color</span><i class="tri"></i></div><div class="qbox qoff" style="width:140px;height:24px"></div></div>
        <div class="d-flex" style="gap:4px;margin-top:4px;width:300px">
          <div class="qbox" style="width:80px;height:27px"><svg width="18" height="18" viewBox="0 0 28 28" style="margin:0 3px 0 17px"><path d="M2 11h24v14H2z" fill="url(#rainbow)"/><path d="M2 18h24M18 11v14" stroke="#6e6d43"/><circle cx="9" cy="9" r="8" fill="#a5d388" stroke="#718359"/></svg><span>Edit</span></div>
          <div class="qbox qoff justify-content-center" style="width:33px;height:27px"><svg width="18" height="18" viewBox="0 0 28 28"><path d="M3 11h24v14H3z" fill="#aaa"/><use href="#chain"/></svg></div>
          <div class="qbox qoff justify-content-center" style="width:33px;height:27px"><svg width="19" height="19" viewBox="0 0 28 28" fill="#ccc" stroke="#999" stroke-width="1.300"><use href="#harrow"/><use href="#scale"/></svg></div>
          <div class="qbox qoff justify-content-center" style="width:33px;height:27px"><svg width="19" height="19" viewBox="0 0 28 28" fill="#ccc" stroke="#999" stroke-width="1.300"><use href="#harrow"/><use href="#scale"/><text x="18" y="26" font-family="DejaVu Sans" font-size="15" font-weight="700" font-style="italic" fill="#666" stroke="none">c</text></svg></div>
          <div class="qbox qoff justify-content-center" style="width:33px;height:27px"><svg width="19" height="19" viewBox="0 0 28 28" fill="#ccc" stroke="#999" stroke-width="1.300"><use href="#harrow"/><use href="#scale"/><text x="19" y="26" font-family="DejaVu Sans" font-size="16" font-weight="700" font-style="italic" fill="#666" stroke="none">t</text></svg></div>
          <div class="qbox qoff justify-content-center" style="width:33px;height:27px"><svg width="19" height="19" viewBox="0 0 19 19"><path d="M1 13V4h4l1-2h4l1 2h6v9z" fill="#ddd" stroke="#aaa"/><path d="M11 18 4 11c-1-5 5-6 7-2 2-4 8-3 7 2z" fill="#999"/></svg></div>
        </div>
        <div class="rule" style="height:25px;padding-top:9px">Styling</div>
        <div class="d-flex align-items-center" style="margin-top:6px;width:330px"><span style="width:91px">Opacity</span><div style="width:104px;height:6px;background:#1a8fe8;border:1px solid #0d67ae;border-radius:1px"></div><div class="qbox" style="width:16px;height:16px;margin:-2px 0 0 -1px"></div><div class="field" style="width:100px;height:26px;margin-left:8px;line-height:25px;padding-left:2px">1</div></div>
      </div>
      <div class="vscroll"><div class="knob" style="height:16px;border-bottom:1px solid #b4b4b4"><i class="tri up"></i></div><div class="knob" style="height:60px;border-bottom:1px solid #b4b4b4"></div><div style="height:155px"></div><div class="knob" style="height:17px;border-top:1px solid #b4b4b4"><i class="tri"></i></div></div>
    </div>
    <div class="hscroll d-flex"><div class="knob" style="width:17px;border-right:1px solid #b4b4b4"><i class="tri lt"></i></div><div class="knob" style="width:177px;border-right:1px solid #b4b4b4"></div><div style="width:51px"></div><div class="knob" style="width:17px;border-left:1px solid #b4b4b4"><i class="tri rt"></i></div></div>
  </div>
</aside>
<div class="d-flex align-items-center" style="width:7px;padding-left:4px"><div class="grip" style="width:1px"></div></div>
<section class="work" style="margin-top:1px">
  <div class="d-flex" style="height:29px;border-bottom:1px solid #b4b4b4">
    <div class="d-flex align-items-center" style="width:122px;height:29px;background:#fbfbfb;border:1px solid #b4b4b4;border-width:1px 1px 0 0;border-radius:3px 3px 0 0"><svg width="16" height="16" viewBox="0 0 16 16" style="margin:0 4px 0 14px"><path d="M.7.7h14.600v14.600H.7z" fill="#fff" stroke="#333"/><path d="M1 1h14v4H1z" fill="#333"/></svg><span style="width:60px">Layout #1</span><svg width="11" height="11"><use href="#closebox"/></svg></div>
    <div style="width:37px;height:27px;margin-top:1px;background:#e7e7e7;border:1px solid #b4b4b4;border-left:0;border-bottom:0;text-align:center;line-height:29px">+</div>
  </div>
  <div class="d-flex align-items-center" style="height:27px;padding:0 0 1px 1px">
    <div class="sm"><svg viewBox="0 0 18 18"><use href="#cam"/><path d="M1 17l1-8 2 2c4-4 9-2 9 2l-1 5c-1-4-3-6-5-3l1 2z" fill="#e12129"/></svg></div>
    <div class="sm"><svg viewBox="0 0 18 18" opacity=".55"><use href="#cam"/><path d="M17 17l-1-8-2 2c-4-4-9-2-9 2l1 5c1-4 3-6 5-3l-1 2z" fill="#ddd" stroke="#999"/></svg></div>
    <div class="smsep"></div>
    <div class="sm"><svg viewBox="0 0 18 18"><path d="M.5 4V.5H4M14 .5h3.500V4M.5 14v3.500H4M14 17.500h3.500V14" fill="none" stroke="#888"/><g transform="translate(1.500 2.500) scale(.83)"><use href="#cam"/></g></svg></div>
    <div class="smsep"></div>
    <div class="sm" style="font:700 11.500px/16px 'Noto Sans',sans-serif;color:#676753">3D</div>
    <div class="sm"><svg viewBox="0 0 18 18"><use href="#cam"/><path d="M9 8l7 8" stroke="#967421" stroke-width="3.500"/><path d="M9 8l7 8" stroke="#edbb2b" stroke-width="2"/></svg></div>
    <div class="smsep"></div>
    <div class="sm"><svg viewBox="0 0 18 18"><use href="#dash"/><path d="M7.500 5h3v2.500H13v3h-2.500V13h-3v-2.500H5v-3h2.500z" fill="#a5d388" stroke="#69914e"/></svg></div>
    <div class="sm"><svg viewBox="0 0 18 18"><use href="#dash"/><path d="M5 7.500h8v3H5z" fill="#e02328"/></svg></div>
    <div class="sm"><svg viewBox="0 0 18 18"><use href="#dash"/><path d="M8 3v7M4.500 6.500h7" stroke="#75a557" stroke-width="2.500"/><path d="M4 12.500h7" stroke="#e02328" stroke-width="2.500"/><use href="#cur"/></svg></div>
    <div class="smsep"></div>
    <div class="sm"><svg viewBox="0 0 18 18"><use href="#dash"/><path d="M9 4l5 9H4z" fill="#a5d388" stroke="#6c8d56"/><use href="#cur"/></svg></div>
    <div class="sm"><svg viewBox="0 0 18 18"><use href="#dash"/><path d="M9 5l4 8H5z" fill="none" stroke="#aaa"/><path d="M9 3v2.500M4 12v2.500" stroke="#ad4d3c" stroke-width="2.500"/><use href="#cur"/></svg></div>
    <div class="sm"><svg viewBox="0 0 18 18"><path d="M2 6l7-4.500L16.500 4v6L9 11.500 2 11z" fill="#8fc472" stroke="#5d8d47"/><path d="M2 6l7 .5L16.500 4M9 6.500v5" stroke="#5d8d47" fill="none"/><path d="M2 13v3.500h7" fill="none" stroke="#999" stroke-dasharray="3 2"/><use href="#cur"/></svg></div>
    <div class="sm"><svg viewBox="0 0 18 18"><path d="M3 6l6-3 7 1v8l-7 2-6-2zM3 6l6 1 7-3M9 7v7" fill="none" stroke="#c4bcbc"/><path d="M3 6h.1M9 3h.1M16 4h.1M3 12h.1M9 7h.1M9 14h.1M14 10h.1" stroke="#cd4f42" stroke-width="1.900" stroke-linecap="round"/><use href="#cur"/></svg></div>
    <div class="sm"><svg viewBox="0 0 18 18"><path d="M2 1h10l-1 5 6 2-2 5 1 4H6l-4-6z" fill="none" stroke="#a0a0a0" stroke-dasharray="2 2"/><path d="M2 9l8-4v8z" fill="#90c475" stroke="#6b9451" stroke-width=".7"/><use href="#cur"/></svg></div>
    <div class="sm"><svg viewBox="0 0 18 18"><path d="M2 1h14l-2 6 3 2-2 8H6l-4-6z" fill="none" stroke="#a0a0a0" stroke-dasharray="2 2"/><path d="M4 5h.1M9 3.500h.1M13 5h.1M6 8.500h.1M10.500 8h.1M4 12h.1M9 12h.1" stroke="#b9523f" stroke-width="2.400" stroke-linecap="round"/><use href="#cur"/></svg></div>
    <div class="sm"><svg viewBox="0 0 18 18"><use href="#dash"/><circle cx="5" cy="5" r="2.500" fill="#2991c9"/><circle cx="5" cy="13" r="2.500" fill="#2991c9"/><circle cx="12" cy="9" r="3" fill="#9acb7a" stroke="#71975a"/><use href="#cur"/></svg></div>
    <div class="sm"><svg viewBox="0 0 18 18"><use href="#dash" opacity=".4"/><path d="M4 5l6-4 7 1.500v6L10 11l-6-1z" fill="#8fc472" stroke="#5d8d47"/><path d="M4 5l6 1 7-3.500" fill="none" stroke="#5d8d47"/><path d="M5 5v.1M8 8v.1M4 10v.1" stroke="#e4ad27" stroke-width="2.500" stroke-linecap="round"/><path d="M3 3v.1M2 8v.1M4 14v.1" stroke="#2991c9" stroke-width="2" stroke-linecap="round"/><use href="#cur"/></svg></div>
    <div class="sm"><svg viewBox="0 0 18 18"><path d="M2 6l5-4h9v8l-4 6H2z" fill="#c6c6c6" stroke="#a5a5a5"/><path d="M2 6h10v10M12 6l4-4M2 12l10-1" fill="none" stroke="#999"/><use href="#cur"/></svg></div>
    <div class="sm"><svg viewBox="0 0 18 18"><circle cx="8" cy="8" r="2.500" fill="#ccc" stroke="#aaa"/><g opacity=".55"><use href="#cur"/></g></svg></div>
    <div class="sm"><svg viewBox="0 0 18 18"><path d="M9 4l5 9H3z" fill="#9acb7a" stroke="#6c8d56"/><use href="#cur"/></svg></div>
    <div class="sm"><svg viewBox="0 0 18 18"><path d="M9 4l5 9H4z" fill="none" stroke="#b5b5b5"/><circle cx="9" cy="3.500" r="1.500" fill="#c44d3c"/><circle cx="4" cy="13" r="1.500" fill="#c44d3c"/><use href="#cur"/></svg></div>
    <div class="sm"><svg viewBox="0 0 18 18"><path d="M6 7l5 9H1z" fill="#9acb7a" stroke="#6c8d56"/><text x="9" y="12" font-family="Noto Sans" font-size="15" fill="#6e7557">?</text></svg></div>
    <div class="sm"><svg viewBox="0 0 18 18"><circle cx="4" cy="13.500" r="2.700" fill="#cf3c2e"/><text x="9" y="12" font-family="Noto Sans" font-size="15" fill="#6e7557">?</text></svg></div>
    <svg width="11" height="9" style="margin:0 1px 0 24px"><use href="#chev"/></svg><b style="letter-spacing:.31px;width:97px;margin-right:1px"><u>RenderView1</u></b>
    <div class="qbox justify-content-center" style="width:26px;height:25px;margin-right:1px"><svg width="14" height="14"><path d="M.5.5h13v13H.5zM7 0v14" fill="#d1d8ee" stroke="#9299b0"/></svg></div>
    <div class="qbox justify-content-center" style="width:26px;height:25px;margin-right:1px"><svg width="14" height="14"><path d="M.5.5h13v13H.5zM0 7h14" fill="#d1d8ee" stroke="#9299b0"/></svg></div>
    <div class="qbox justify-content-center" style="width:26px;height:25px;margin-right:1px"><svg width="18" height="18"><path d="M.7.7h16.600v16.600H.7z" fill="#f4f4f4" stroke="#333"/><path d="M1 1h16v4H1z" fill="#333"/></svg></div>
    <div class="qbox justify-content-center" style="width:26px;height:25px"><svg width="11" height="11"><use href="#closebox"/></svg></div>
  </div>
  <div class="render" style="margin-left:1px">
    <svg class="position-absolute" style="left:0;top:0" width="836" height="567" viewBox="311 245 836 567">
      <path d="M311.500 245.500H1146.500V811.500H311.500z" fill="none" stroke="#eee"/>
      <path d="M638 378 825 372 889.500 518.500 827 691 646.500 665.500 545 541zM638 378 718.500 510.500 889.500 518.500M825 372 743 555.500 827 691M743 555.500 545 541M718.500 510.500 646.500 665.500" fill="none" stroke="#e4e4ea"/>
      <path d="M382 741 358 740" stroke="#13c71c" stroke-width="1.500"/><path d="M352 739.500l8-2.500v5z" fill="#087c10"/>
      <path d="M382 741 370 768" stroke="#b0ae30" stroke-width="1.500"/><path d="M368.500 773.500l-.5-8.500 6 2z" fill="#f4f111"/>
      <path d="M382 741l12 17" stroke="#ee1515" stroke-width="1.500"/><circle cx="395" cy="760" r="2.800" fill="#b60808"/>
      <g fill="#fff" font-family="Liberation Sans" font-size="10"><text x="359" y="739">Z</text><text x="373" y="767">Y</text><text x="396" y="760">X</text></g>
    </svg>
  </div>
</section>
</main>
<footer class="d-flex" style="height:23px">
  <div class="qbox justify-content-center" style="width:19px;height:19px;margin:3px 3px 0 374px"><svg width="9" height="9"><path d="M1.500 1.500l6 6m0-6-6 6" stroke="#888" stroke-width="3"/></svg></div>
  <div style="width:350px;border:1px solid #a0a0a0;border-right-color:#fff;border-bottom:0;margin-right:7px"></div>
  <div class="usage"><div class="fill" style="width:326px">LAPTOP-744S5RH9: 13.4 GiB/15.4 GiB 87.3%</div></div>
  <div class="grip" style="margin:14px 0 0 17px;width:5px;height:9px"></div>
</footer>
<script src="https://cdn.jsdelivr.net/npm/bootstrap@5.3.0/dist/js/bootstrap.bundle.min.js"></script>
</body>
</html>
